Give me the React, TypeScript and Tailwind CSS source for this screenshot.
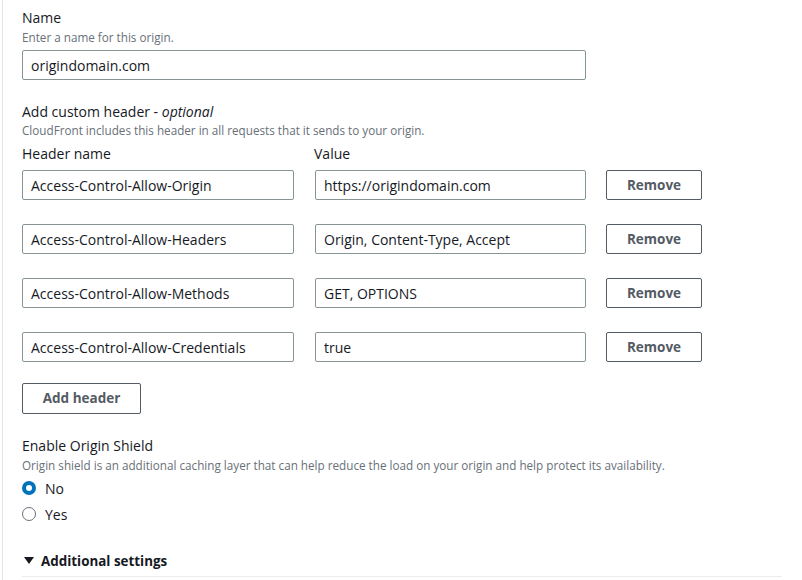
import { useState } from 'react';

const rows = [
  { name: 'Access-Control-Allow-Origin', value: 'https://origindomain.com' },
  { name: 'Access-Control-Allow-Headers', value: 'Origin, Content-Type, Accept' },
  { name: 'Access-Control-Allow-Methods', value: 'GET, OPTIONS' },
  { name: 'Access-Control-Allow-Credentials', value: 'true' },
];

const inputCls =
  'h-[30px] rounded-[2px] border border-[#879596] bg-white pl-[8px] text-[14px] text-[#16191f] outline-none';

const Radio = ({ checked, label, onClick }: { checked: boolean; label: string; onClick: () => void }) => (
  <div className="flex h-[20px] cursor-pointer items-center" onClick={onClick}>
    <span
      className={
        checked
          ? 'box-border h-[14px] w-[14px] rounded-full border-[4px] border-[#0073bb] bg-white'
          : 'box-border h-[14px] w-[14px] rounded-full border border-[#687078] bg-white'
      }
    />
    <span className="ml-[9px] text-[14px] text-[#16191f]">{label}</span>
  </div>
);

const App = () => {
  const [name, setName] = useState('origindomain.com');
  const [shield, setShield] = useState(false);
  return (
    <div className="min-h-screen w-full bg-white pl-[2px] font-['Open_Sans',sans-serif]">
      <div className="min-h-[580px] border-l border-[#e1e4e8] pl-[19px] pt-[8px]">
        <div className="h-[20px] text-[14px] leading-[20px] text-[#16191f]">Name</div>
        <div className="mt-[1px] h-[16px] text-[11.7px] leading-[16px] text-[#687078]">
          Enter a name for this origin.
        </div>
        <input
          className={inputCls + ' mt-[5px] w-[564px]'}
          value={name}
          onChange={(e) => setName(e.target.value)}
        />

        <div className="mt-[22px] h-[20px] text-[14px] leading-[20px] text-[#16191f]">
          Add custom header - <i>optional</i>
        </div>
        <div className="h-[16px] text-[11.7px] leading-[16px] text-[#687078]">
          CloudFront includes this header in all requests that it sends to your origin.
        </div>
        <div className="mt-[6px] flex h-[20px] text-[14px] leading-[20px] text-[#16191f]">
          <div className="w-[292px]">Header name</div>
          <div>Value</div>
        </div>
        <div className="mt-[6px] flex flex-col gap-[24px]">
          {rows.map((r) => (
            <div key={r.name} className="flex items-center">
              <input className={inputCls + ' w-[272px]'} defaultValue={r.name} />
              <input className={inputCls + ' ml-[21px] w-[271px]'} defaultValue={r.value} />
              <button className="ml-[20px] h-[30px] w-[96px] rounded-[2px] border border-[#545b64] bg-white text-[13.5px] font-bold text-[#545b64]">
                Remove
              </button>
            </div>
          ))}
        </div>
        <button className="mt-[21px] h-[31px] w-[119px] rounded-[2px] border border-[#545b64] bg-white text-[13.5px] font-bold text-[#545b64]">
          Add header
        </button>

        <div className="mt-[22px] h-[20px] text-[14px] leading-[20px] text-[#16191f]">Enable Origin Shield</div>
        <div className="mt-[1px] h-[16px] text-[11.7px] leading-[16px] text-[#687078]">
          Origin shield is an additional caching layer that can help reduce the load on your origin and help
          protect its availability.
        </div>
        <div className="mt-[5px] flex flex-col gap-[6px]">
          <Radio checked={!shield} label="No" onClick={() => setShield(false)} />
          <Radio checked={shield} label="Yes" onClick={() => setShield(true)} />
        </div>

        <div className="mt-[27px] flex h-[20px] items-center text-[13.4px] font-bold text-[#16191f]">
          <svg width="10" height="8" viewBox="0 0 10 8" className="ml-[2px] mr-[7px]">
            <path d="M0 0 L10 0 L5 7 Z" fill="#16191f" />
          </svg>
          Additional settings
        </div>
        <div className="mt-[5px] w-[760px] border-t border-[#eaeded]" />
      </div>
    </div>
  );
};

export default App;
